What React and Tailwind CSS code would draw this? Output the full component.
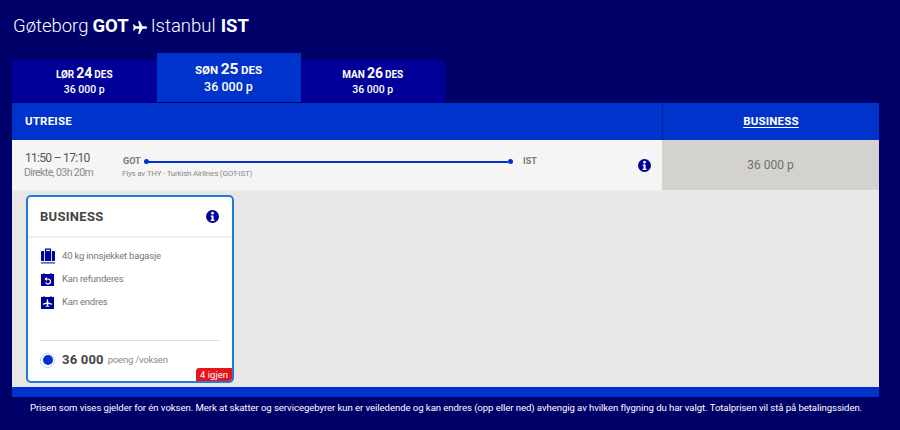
import React from "react";

function Info({ className = "" }) {
  return (
    <svg viewBox="0 0 24 24" className={className}>
      <circle cx="12" cy="12" r="12" fill="#000099" />
      <circle cx="12" cy="5.8" r="2.4" fill="#fff" />
      <path d="M8.6 10h5.4v8h1.8v2.4H8.4V18h1.9v-5.6H8.6z" fill="#fff" />
    </svg>
  );
}

function Bag() {
  return (
    <svg viewBox="0 0 14 16" className="w-[14px] h-[16px] shrink-0">
      <path d="M4.5 3V1.2h5V3" fill="none" stroke="#000099" strokeWidth="1.2" />
      <rect x="0" y="3" width="14" height="10" rx="1" fill="#000099" />
      <rect x="3" y="3" width="0.8" height="10" fill="#fff" />
      <rect x="10.2" y="3" width="0.8" height="10" fill="#fff" />
      <rect x="0" y="14.4" width="14" height="1" fill="#000099" />
    </svg>
  );
}

function Refund() {
  return (
    <svg viewBox="0 0 13 13" className="w-[13px] h-[13px] shrink-0">
      <rect x="0" y="1" width="13" height="12" fill="#000099" />
      <rect x="2.5" y="0" width="1" height="2" fill="#000099" />
      <rect x="9.5" y="0" width="1" height="2" fill="#000099" />
      <path d="M4.5 6h2.5a2.5 2.5 0 1 1-2.3 3.4" fill="none" stroke="#fff" strokeWidth="1.2" />
      <path d="M6 3.9 3.4 6 6 8.1z" fill="#fff" />
    </svg>
  );
}

function Change() {
  return (
    <svg viewBox="0 0 13 13" className="w-[13px] h-[13px] shrink-0">
      <rect x="0" y="1" width="13" height="12" fill="#000099" />
      <rect x="2.5" y="0" width="1" height="2" fill="#000099" />
      <rect x="9.5" y="0" width="1" height="2" fill="#000099" />
      <path d="M6.5 3.2c.4 0 .7.5.7 1v2l4 1.6v1l-4-.9v1.6l1.1.9v.7l-1.8-.5-1.8.5v-.7l1.1-.9V7.9l-4 .9v-1l4-1.6v-2c0-.5.3-1 .7-1z" fill="#fff" />
    </svg>
  );
}

function Plane() {
  return (
    <svg viewBox="0 0 16 16" className="w-[15px] h-[15px] mx-[3.5px] shrink-0 mt-[2px]">
      <path d="M6.6 1h1.6l3 5.6h3.4c.9 0 1.4.6 1.4 1.4s-.5 1.4-1.4 1.4h-3.4l-3 5.6H6.6l1.2-5.6H3.9L2.3 11.3H1L1.8 8 1 4.7h1.3l1.6 1.9h3.9z" fill="#fff" />
    </svg>
  );
}

function Tab({ day, num, mon, active }) {
  return (
    <div
      className={
        active
          ? "w-[144px] h-[49px] bg-[#0032cc] flex flex-col items-center justify-center text-white pb-[1px]"
          : "w-[144.5px] h-[42px] bg-[#000099] flex flex-col items-center justify-center text-white"
      }
    >
      <div className={active ? "font-bold text-[11.5px] leading-[18px] flex items-baseline gap-[2.5px]" : "font-bold text-[10px] leading-[16px] flex items-baseline gap-[2px]"}>
        <span>{day}</span>
        <span className={active ? "text-[15.5px]" : "text-[14px]"}>{num}</span>
        <span>{mon}</span>
      </div>
      <div className={active ? "font-medium text-[12.5px] leading-[16px]" : "font-medium text-[10.5px] leading-[14px]"}>36 000 p</div>
    </div>
  );
}

export default function App() {
  return (
    <div className="w-[900px] h-[430px] bg-[#00006a] overflow-hidden font-['Roboto','Noto_Sans',sans-serif] pt-[14px]">
      <h1 className="px-[13px] h-[24px] flex items-center text-white text-[18.5px] leading-[24px] font-light">
        <span>Gøteborg</span>
        <span className="font-bold ml-[4px]">GOT</span>
        <Plane />
        <span>Istanbul</span>
        <span className="font-bold ml-[5px]">IST</span>
      </h1>
      <div className="mx-[12px] mt-[15px] flex items-end h-[49px]">
        <Tab day="LØR" num="24" mon="DES" />
        <Tab day="SØN" num="25" mon="DES" active />
        <Tab day="MAN" num="26" mon="DES" />
      </div>
      <div className="ml-[12px] w-[867px] mt-[1px]">
        <div className="h-[37px] bg-[#0032cc] flex text-white font-bold text-[11.5px]">
          <div className="flex-1 flex items-center pl-[13px] tracking-[0.2px]">UTREISE</div>
          <div className="w-[217px] border-l border-[#002299] flex items-center justify-center underline underline-offset-2 tracking-[0.2px]">BUSINESS</div>
        </div>
        <div className="h-[50px] flex">
          <div className="flex-1 bg-[#f5f5f5] relative flex items-start pl-[13px]">
            <div className="w-[97px] pt-[10px]">
              <div className="text-[12px] leading-[16px] font-normal text-[#555] tracking-[-0.7px]">11:50 – 17:10</div>
              <div className="text-[10.5px] leading-[13px] text-[#8a8a8a] tracking-[-0.6px] ml-[-1px]">Direkte, 03h 20m</div>
            </div>
            <div className="flex-1 pt-[15px]">
              <div className="flex items-center h-[13px]">
                <span className="text-[9px] font-bold text-[#777] w-[22px] ml-[1px] mr-[-1px]">GOT</span>
                <span className="w-[5px] h-[5px] rounded-full bg-[#0032cc]" />
                <span className="w-[359px] h-[2px] bg-[#0032cc]" />
                <span className="w-[5px] h-[5px] rounded-full bg-[#0032cc]" />
                <span className="text-[9px] font-bold text-[#777] ml-[10px]">IST</span>
              </div>
              <div className="text-[8px] leading-[12px] text-[#8a8a8a] tracking-[-0.2px]">Flys av THY - Turkish Airlines (GOT-IST)</div>
            </div>
            <Info className="absolute right-[11px] top-[19px] w-[13px] h-[13px]" />
          </div>
          <div className="w-[217px] bg-[#d3d2ce] flex items-center justify-center text-[12px] text-[#6f6f6f]">36 000 p</div>
        </div>
        <div className="h-[197px] bg-[#e8e7e5] pl-[14px] pt-[4px] border-t border-[#eeeeec]">
          <div className="w-[208px] h-[188px] bg-white border-2 border-[#1e7ae0] rounded-[5px] relative flex flex-col overflow-hidden">
            <div className="h-[41px] flex items-center justify-between pl-[12px] pr-[13px] border-b-2 border-[#eeeeee] shrink-0">
              <span className="font-bold text-[13px] text-[#444] tracking-[0.3px]">BUSINESS</span>
              <Info className="w-[13px] h-[13px]" />
            </div>
            <div className="pl-[13px] pt-[10px] flex flex-col gap-[7px] text-[9.5px] text-[#777] tracking-[-0.2px]">
              <div className="flex items-center gap-[7px] h-[16px]"><Bag /><span>40 kg innsjekket bagasje</span></div>
              <div className="flex items-center gap-[8px] h-[16px]"><Refund /><span>Kan refunderes</span></div>
              <div className="flex items-center gap-[8px] h-[16px]"><Change /><span>Kan endres</span></div>
            </div>
            <div className="mx-[12px] mt-auto h-[41px] pb-[2px] border-t border-[#dddddd] flex items-center">
              <span className="w-[15px] h-[15px] rounded-full border border-[#c8d0ea] flex items-center justify-center shrink-0">
                <span className="w-[10px] h-[10px] rounded-full bg-[#0032cc]" />
              </span>
              <span className="font-bold text-[13px] text-[#444] ml-[7px] tracking-[0.2px]">36 000</span>
              <span className="text-[9.5px] text-[#8a8a8a] ml-[4px] tracking-[-0.2px]">poeng /voksen</span>
            </div>
            <div className="absolute right-0 bottom-0 w-[36px] h-[13px] bg-[#e8141c] text-white text-[9.5px] leading-[13px] text-center rounded-tl-[3px]">4 igjen</div>
          </div>
        </div>
        <div className="h-[10px] bg-[#0032cc]" />
      </div>
      <p className="text-center text-white text-[9.6px] leading-[14px] mt-[4px] w-[892px] tracking-[-0.075px]">
        Prisen som vises gjelder for én voksen. Merk at skatter og servicegebyrer kun er veiledende og kan endres (opp eller ned) avhengig av hvilken flygning du har valgt. Totalprisen vil stå på betalingssiden.
      </p>
    </div>
  );
}
